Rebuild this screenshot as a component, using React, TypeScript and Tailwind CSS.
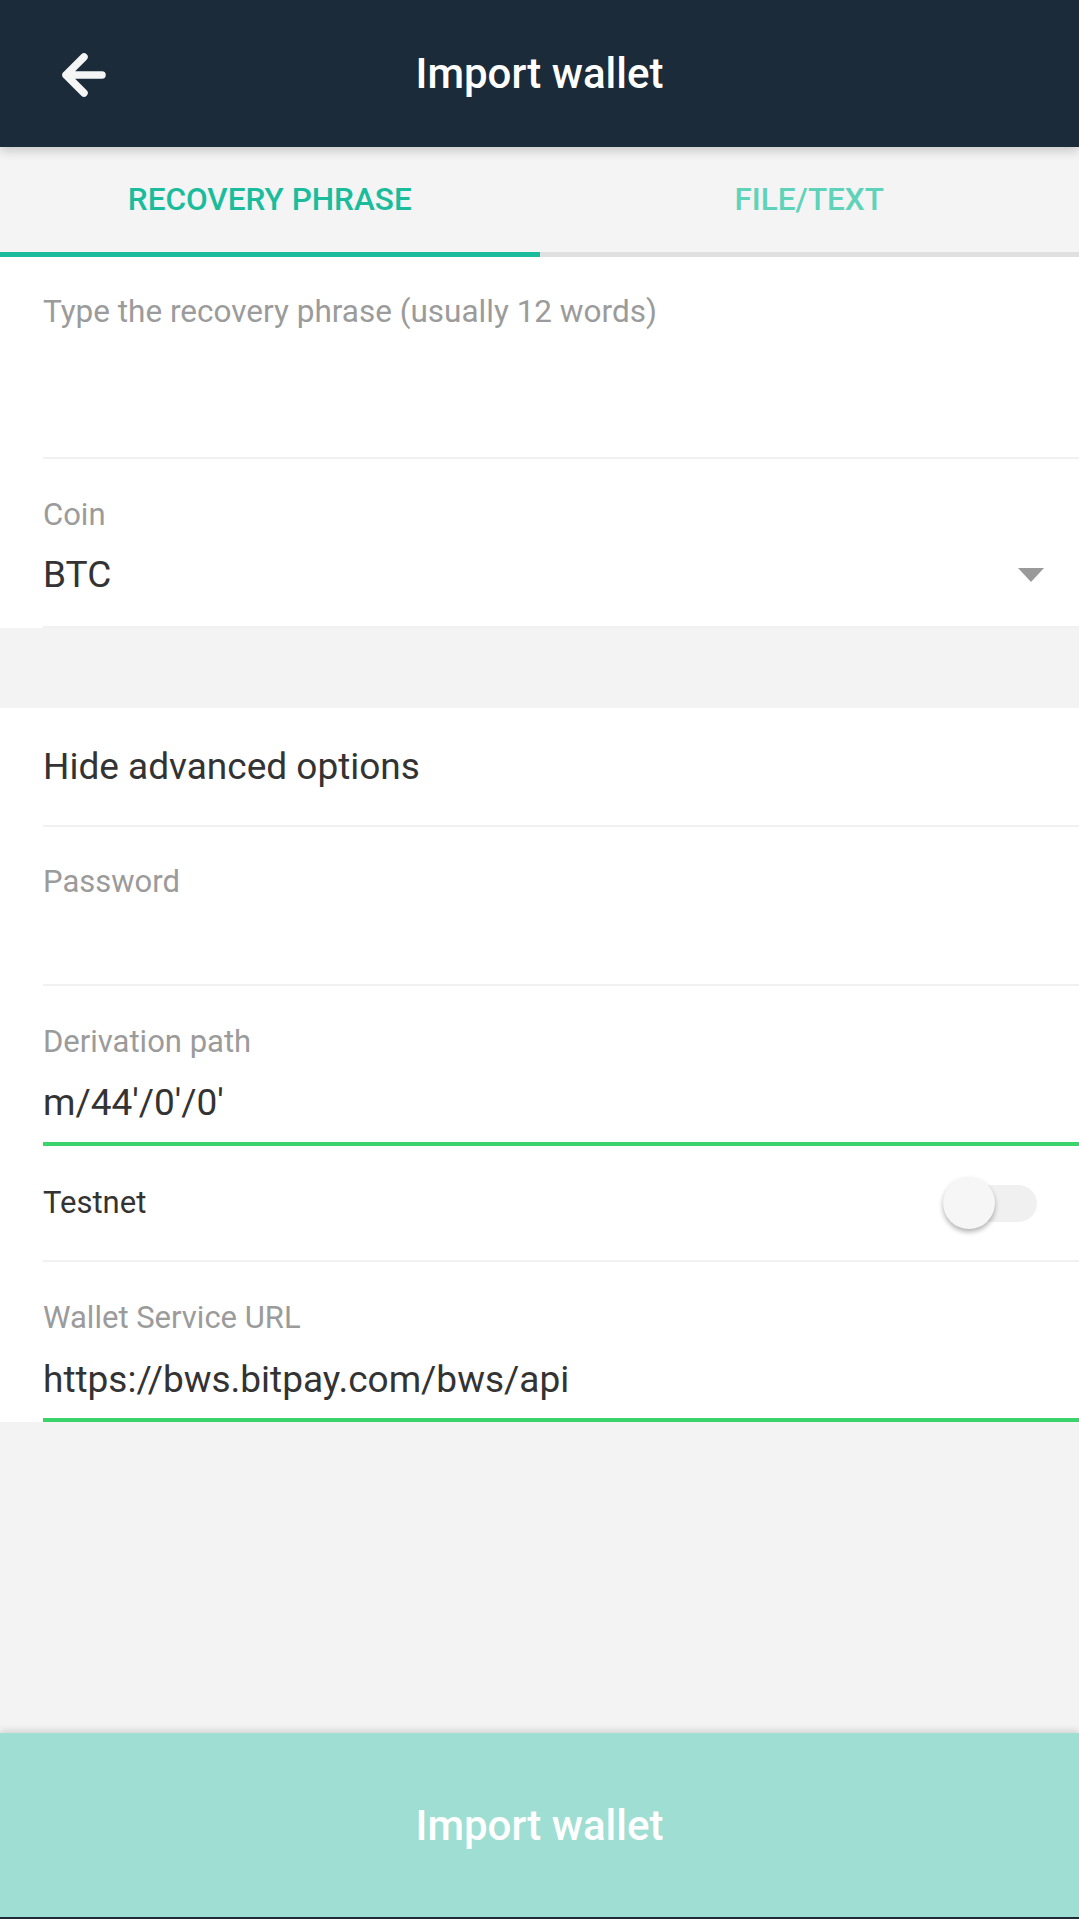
import React from "react";

function BackArrow() {
  return (
    <svg width="60" height="60" viewBox="0 0 60 60" fill="none">
      <path
        d="M12 30H48M30 12L12 30L30 48"
        stroke="#f5f5f5"
        strokeWidth="7.5"
        strokeLinecap="round"
        strokeLinejoin="round"
      />
    </svg>
  );
}

function Separator({ green }: { green?: boolean }) {
  return green ? (
    <div className="ml-[43px] h-[4px] bg-[#3ad46b]" />
  ) : (
    <div className="ml-[43px] h-[2px] bg-[#f1f1f1]" />
  );
}

function Toggle() {
  return (
    <div className="relative w-[94px] h-[37px] rounded-full bg-[#f0f0f0]">
      <div className="absolute left-0 top-1/2 -translate-y-1/2 w-[52px] h-[52px] rounded-full bg-[#f6f6f6] shadow-[0_3px_5px_rgba(0,0,0,0.3)]" />
    </div>
  );
}

export default function App() {
  return (
    <div
      className="w-[1079px] h-[1919px] flex flex-col bg-[#f3f3f3] overflow-hidden"
      style={{ fontFamily: "Roboto, 'Noto Sans', sans-serif" }}
    >
      {/* header */}
      <header className="relative z-10 h-[147px] shrink-0 bg-[#1b2b3a] grid grid-cols-[1fr_auto_1fr] items-center shadow-[0_4px_10px_rgba(0,0,0,0.18)]">
        <div className="pl-[54px] pt-[2px]">
          <BackArrow />
        </div>
        <h1 className="text-[42px] leading-[48px] font-medium text-white">Import wallet</h1>
        <div />
      </header>

      {/* tabs */}
      <div className="h-[110px] shrink-0 bg-[#f4f4f4] flex">
        <div className="flex-1 flex flex-col">
          <div className="flex-1 flex items-center justify-center text-[31.5px] font-medium text-[#1abc9c]">
            RECOVERY PHRASE
          </div>
          <div className="h-[5px] bg-[#1abc9c]" />
        </div>
        <div className="flex-1 flex flex-col">
          <div className="flex-1 flex items-center justify-center text-[31.5px] font-medium text-[#5fd3b9]">
            FILE/TEXT
          </div>
          <div className="h-[5px] bg-[#e0e0e0]" />
        </div>
      </div>

      {/* recovery phrase + coin */}
      <div className="bg-white shrink-0">
        <div className="h-[200px] pt-[37px] pl-[43px] text-[31.5px] leading-[36px] text-[#9b9b9b]">
          Type the recovery phrase (usually 12 words)
        </div>
        <Separator />
        <div className="h-[167px] pt-[38px] pl-[43px]">
          <div className="text-[31px] leading-[36px] text-[#9b9b9b]">Coin</div>
          <div className="mt-[21px] flex items-center justify-between pr-[35px]">
            <span className="text-[37px] leading-[42px] text-[#333333]">BTC</span>
            <svg width="26" height="14" viewBox="0 0 26 14">
              <path d="M0 0H26L13 14Z" fill="#9a9a9a" />
            </svg>
          </div>
        </div>
        <Separator />
      </div>

      <div className="h-[80px] shrink-0" />

      {/* advanced options */}
      <div className="bg-white shrink-0">
        <div className="h-[117px] flex items-center pl-[43px] text-[37px] text-[#333333]">
          Hide advanced options
        </div>
        <Separator />
        <div className="h-[157px] pt-[37px] pl-[43px] text-[31px] leading-[36px] text-[#9b9b9b]">
          Password
        </div>
        <Separator />
        <div className="h-[156px] pt-[38px] pl-[43px]">
          <div className="text-[31px] leading-[36px] text-[#9b9b9b]">Derivation path</div>
          <div className="mt-[22px] text-[37px] leading-[42px] text-[#333333]">m/44'/0'/0'</div>
        </div>
        <Separator green />
        <div className="h-[114px] flex items-center justify-between pl-[43px] pr-[42px]">
          <span className="text-[31px] text-[#333333]">Testnet</span>
          <Toggle />
        </div>
        <Separator />
        <div className="h-[156px] pt-[38px] pl-[43px]">
          <div className="text-[31px] leading-[36px] text-[#9b9b9b]">Wallet Service URL</div>
          <div className="mt-[23px] text-[37px] leading-[42px] text-[#333333]">
            https://bws.bitpay.com/bws/api
          </div>
        </div>
        <Separator green />
      </div>

      <div className="flex-1" />

      {/* bottom button */}
      <button className="h-[184px] shrink-0 bg-[#9fded2] text-white text-[42px] font-medium shadow-[0_-3px_6px_rgba(0,0,0,0.12)]">
        Import wallet
      </button>
      <div className="h-[2px] shrink-0 bg-[#1b2b3a]" />
    </div>
  );
}
